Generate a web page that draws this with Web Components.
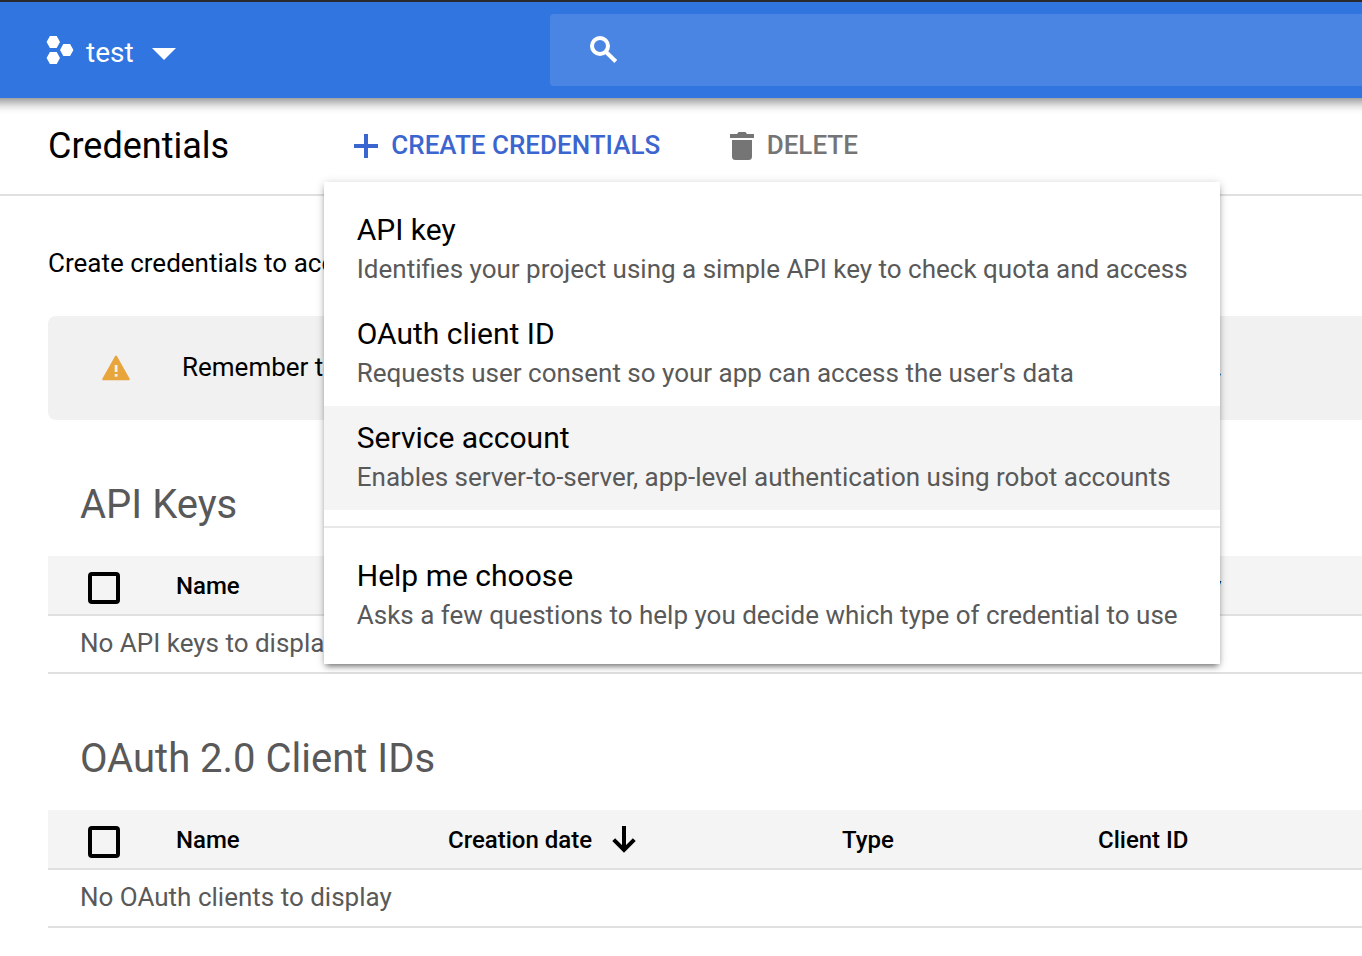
<!DOCTYPE html>
<html lang="en">
<head>
<meta charset="utf-8">
<title>Credentials</title>
<style>
html,body{margin:0;height:956px;overflow:hidden;background:#fff}
body{font-family:Roboto,"Liberation Sans",sans-serif;font-size:26px;color:#000}
</style>
</head>
<body>
<credentials-page></credentials-page>
<script>
const define = (name, html) => customElements.define(name, class extends HTMLElement {
  constructor() {
    super();
    const t = document.createElement('template');
    t.innerHTML = html;
    this.attachShadow({mode: 'open'}).append(t.content.cloneNode(true));
  }
});

define('top-bar', `
<style>
:host{display:flex;box-sizing:border-box;height:98px;border-top:2px solid #2a2a2e;background:#3175e1;color:#fff;position:relative;z-index:1}
:host::after{content:"";position:absolute;left:0;right:0;top:100%;height:17px;background:linear-gradient(rgba(0,0,0,.37),rgba(0,0,0,.23) 25%,rgba(0,0,0,.1) 50%,rgba(0,0,0,.025) 75%,transparent)}
.project{display:flex;align-items:center;width:504px;padding-left:46px;font-size:28px}
.project svg{display:block}
.name{line-height:40px;margin:5px 18px 0 12px}
.search{flex:1;margin:12px 0;border-radius:4px 0 0 4px;background:#4a85e3;padding:22px 40px}
.caret{margin-top:7px}
.logo{margin-top:-1px}
</style>
<div class="project">
<svg class="logo" width="28" height="28" viewBox="0 0 28 28" fill="#fff"><path d="M.6 6 3.900 0h6.800L14 6l-3.300 6H3.900z"/><path d="M14 14l3.300-6h6.800l3.300 6-3.300 6h-6.800z"/><path d="M.6 22l3.300-6h6.800l3.300 6-3.300 6H3.900z"/></svg>
<span class="name"><slot></slot></span>
<svg class="caret" width="24" height="12" viewBox="0 0 24 12"><path d="M0 0h24L12 12z" fill="#fff"/></svg>
</div>
<div class="search"><svg width="28" height="28" viewBox="0 0 28 28" fill="none" stroke="#fff" stroke-width="4"><circle cx="10" cy="10" r="8"/><path d="M15.500 15.500l10.300 10"/></svg></div>`);

define('menu-item', `
<style>
:host{display:block;box-sizing:border-box;height:104px;padding:12px 31px 14px 32.750px;white-space:nowrap}
:host([active]){background:#f4f4f4}
.title{font-size:30px;line-height:40px;color:#000}
.note{font-size:26px;line-height:38px;color:#595959}
</style>
<div class="title"><slot></slot></div><div class="note"><slot name="note"></slot></div>`);

define('create-menu', `
<style>
:host{display:block;box-sizing:border-box;width:896px;padding:16px 0;background:#fff;box-shadow:0 4px 6px -2px rgba(0,0,0,.5),0 1px 9px rgba(0,0,0,.16)}
hr{margin:16px 0;border:0;height:2px;background:#e8e8e8}
</style>
<menu-item>API key<span slot="note">Identifies your project using a simple API key to check quota and access</span></menu-item>
<menu-item>OAuth client ID<span slot="note">Requests user consent so your app can access the user's data</span></menu-item>
<menu-item active>Service account<span slot="note">Enables server-to-server, app-level authentication using robot accounts</span></menu-item>
<hr>
<menu-item>Help me choose<span slot="note">Asks a few questions to help you decide which type of credential to use</span></menu-item>`);

define('action-bar', `
<style>
:host{display:flex;box-sizing:border-box;height:98px;border-bottom:2px solid #e0e0e0;padding-left:48px;align-items:center}
h1{margin:0;width:306px;font-size:36px;font-weight:400;line-height:42px}
.action{display:flex;align-items:center;font-weight:500;line-height:30px;position:relative;white-space:nowrap}
.create{color:#3b66d0;width:376px}
.create svg{margin-right:13.300px}
.delete{color:#757575}
.delete svg{margin-right:12.700px}
.label{padding-bottom:2px}
create-menu{position:absolute;left:-30px;top:52px;z-index:2;font-weight:400}
</style>
<h1>Credentials</h1>
<div class="action create"><svg width="24" height="24" viewBox="0 0 24 24"><path d="M10 0h4v10h10v4H14v10h-4V14H0v-4h10z" fill="currentColor"/></svg><span class="label">CREATE CREDENTIALS</span><create-menu></create-menu></div>
<div class="action delete"><svg width="24" height="28" viewBox="0 0 24 28" fill="currentColor"><path d="M0 2h7l1.500-2h7L17 2h7v4H0zM2 8h20v16.500a3.500 3.500 0 0 1-3.500 3.500h-13A3.500 3.500 0 0 1 2 24.500z"/></svg><span class="label">DELETE</span></div>`);

define('notice-bar', `
<style>
:host{display:flex;align-items:center;height:104px;margin-left:48px;background:#f1f1f1;border-radius:8px 0 0 8px;white-space:nowrap;overflow:hidden}
svg{flex:none;margin:0 51.700px 0 54.300px}
div{display:flex;justify-content:space-between;width:1040.500px;line-height:30px;padding-bottom:2px}
</style>
<svg width="28" height="26" viewBox="0 0 28 26"><path d="M14 1.500 26.800 24.200H1.200z" fill="#e8a53c" stroke="#e8a53c" stroke-width="2" stroke-linejoin="round"/><path d="M12.700 10h2.800v7h-2.800zM12.700 19h2.800v2.700h-2.800z" fill="#f1f1f1"/></svg>
<div><slot></slot><slot name="end"></slot></div>`);

define('check-box', `<style>:host{display:block;box-sizing:border-box;width:32px;height:32px;border:4px solid #000;border-radius:4px}</style>`);

define('sort-arrow', `<style>:host{display:block;width:24px;height:27px}svg{display:block}</style>
<svg width="24" height="27" viewBox="0 0 24 27" fill="none" stroke="#000" stroke-width="4"><path d="M12 0v24M1.700 13.700 12 24l10.300-10.300"/></svg>`);

define('data-section', `
<style>
:host{display:block;padding-left:48px}
h2{margin:0;padding-left:32px;font-size:40px;font-weight:400;line-height:48px;color:#595959}
.head{display:grid;grid-template-columns:var(--cols);align-items:center;height:58px;margin-top:27px;padding-left:40px;background:#f4f4f4;border-bottom:2px solid #e0e0e0;font-size:24px;font-weight:500;line-height:28px;white-space:nowrap}
check-box{margin-top:6px}
::slotted([slot=col]){padding-top:2px}
.empty{height:54px;padding:0 0 2px 32px;border-bottom:2px solid #e0e0e0;line-height:54px;color:#595959}
</style>
<h2><slot name="title"></slot></h2>
<div class="head"><check-box></check-box><slot name="col"></slot></div>
<div class="empty"><slot></slot></div>`);

define('credentials-page', `
<style>
:host{display:block;height:956px;overflow:hidden}
p{margin:52px 0 38px;padding-left:48px;line-height:30px}
.api{--cols:88px 272px 385px 349px 1fr;margin-top:61px}
.oauth{--cols:88px 272px 394px 256px 1fr;margin-top:61px}
.sorted{display:flex;align-items:center;gap:20px}
sort-arrow{margin-top:-1px}
</style>
<top-bar>test</top-bar>
<action-bar></action-bar>
<p>Create credentials to access</p>
<notice-bar>Remember to<span slot="end">.</span></notice-bar>
<data-section class="api"><span slot="title">API Keys</span><span slot="col">Name</span><span slot="col"></span><span slot="col"></span><span slot="col">Key</span>No API keys to display</data-section>
<data-section class="oauth"><span slot="title">OAuth 2.0 Client IDs</span><span slot="col">Name</span><span slot="col" class="sorted">Creation date<sort-arrow></sort-arrow></span><span slot="col">Type</span><span slot="col">Client ID</span>No OAuth clients to display</data-section>`);
</script>
</body>
</html>
